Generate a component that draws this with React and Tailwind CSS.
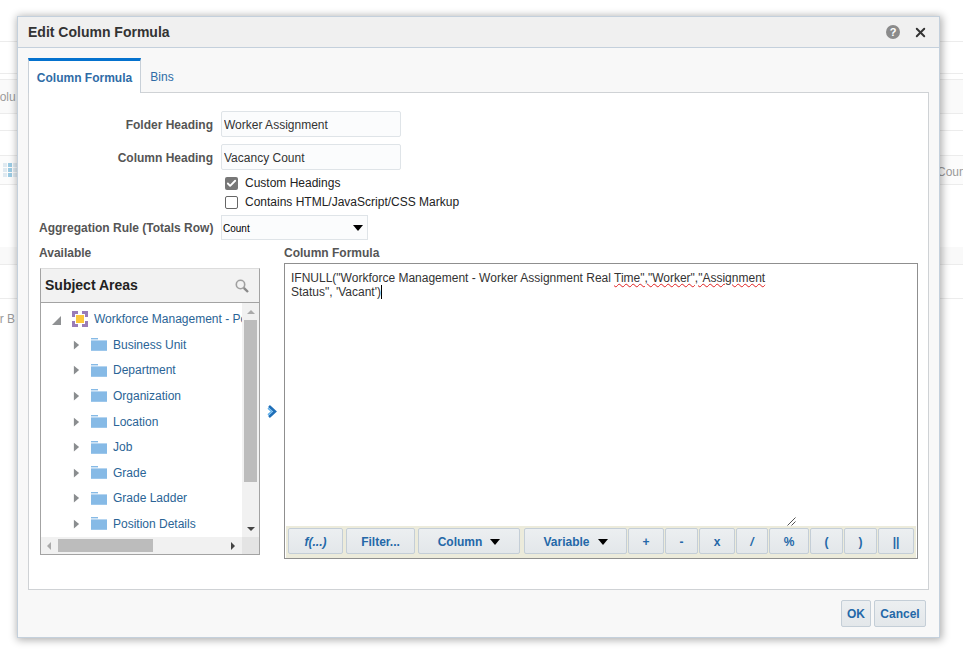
import { Check, X } from "lucide-react"

const folders = ["Business Unit", "Department", "Organization", "Location", "Job", "Grade", "Grade Ladder", "Position Details"]

const bgRows = [
  "h-[42px] border-b border-[#ececec]",
  "h-[32px] border-b border-[#ececec]",
  "h-[5px]",
  "h-[35px] border-y border-[#ececec] bg-[#fafafa]",
  "h-[17px] border-b border-[#ececec]",
  "h-[24px]",
  "h-[30px] border-y border-[#ececec] bg-[#fcfcfc]",
  "h-[62px]",
  "h-[18px] border-b border-[#ececec] bg-[#f9f9f9]",
  "h-[34px] border-b border-[#ececec]",
]

const gridCells = ["#dfe9f0", "#9ccbe3", "#dfe9f0", "#dfe9f0", "#9ccbe3", "#dfe9f0", "#dfe9f0", "#9ccbe3", "#dfe9f0"]

function Triangle({ className }) {
  return (
    <svg viewBox="0 0 8 12" className={className}>
      <path d="M1 1 L7 6 L1 11 Z" fill="#8a8d8f" />
    </svg>
  )
}

function FolderIcon() {
  return (
    <svg viewBox="0 0 16 13" className="w-4 h-[13px] shrink-0">
      <rect x="0" y="0" width="7" height="1.4" fill="#86bae6" />
      <rect x="0" y="2.4" width="16" height="10.4" fill="#86bae6" />
    </svg>
  )
}

function SubjectIcon() {
  return (
    <svg viewBox="0 0 16 16" className="w-4 h-4 shrink-0">
      <path d="M0 0h6v3H3v3H0z M10 0h6v6h-3V3h-3z M0 10h3v3h3v3H0z M13 10h3v6h-6v-3h3z" fill="#9a7db8" />
      <rect x="4" y="4" width="8" height="8" fill="#fcc83c" />
    </svg>
  )
}

function ToolButton({ width, italic, children }) {
  return (
    <button className={`${width} h-[26px] pt-[1px] shrink-0 flex items-center justify-center gap-2 rounded-[2px] border border-[#c4ced7] bg-linear-to-b from-[#eceff1] to-[#e3e7ea] text-[12px] font-bold text-[#2468a8] ${italic ? "italic" : ""}`}>
      {children}
    </button>
  )
}

function DownArrow() {
  return <span className="w-0 h-0 border-x-[5px] border-x-transparent border-t-[6px] border-t-black" />
}

function Field({ label, value }) {
  return (
    <div className="flex items-center h-[26px]">
      <label className="w-[182px] pr-2 pt-[1px] text-right text-[12px] font-bold text-[#555]">{label}</label>
      <input
        readOnly
        value={value}
        className="w-[180px] h-[26px] px-[2px] pt-[1px] rounded-[2px] border border-[#dfe4e8] bg-[#fbfcfd] text-[12px] text-[#333] outline-none"
      />
    </div>
  )
}

export default function App() {
  return (
    <div className="relative w-[963px] h-[659px] overflow-hidden bg-white font-['Liberation_Sans',Arial,sans-serif]">
      {/* page behind the dialog */}
      <div>
        {bgRows.map((row, i) => (
          <div key={i} className={row} />
        ))}
      </div>
      <span className="absolute left-[-9px] top-[88px] text-[12px] text-[#9a9a9a]">Colu</span>
      <span className="absolute left-[-7px] top-[310px] text-[12px] text-[#9a9a9a]">er B</span>
      <span className="absolute left-[937px] top-[163px] text-[12px] text-[#9a9a9a]">Count</span>
      <div className="absolute left-[3px] top-[163px] grid grid-cols-3 gap-px w-[14px]">
        {gridCells.map((color, i) => (
          <span key={i} className="h-[4px]" style={{ backgroundColor: color }} />
        ))}
      </div>

      {/* dialog */}
      <div className="absolute left-[17px] top-[16px] w-[923px] h-[622px] flex flex-col border border-[#c4d0dc] bg-[#f8f8f8] shadow-[1px_1px_8px_1px_rgba(0,0,0,0.32)]">
        <div className="h-[31px] shrink-0 flex items-center px-[10px] border-b border-[#c4d0dc] bg-[#f0f0f0]">
          <h1 className="pt-[1px] text-[14px] font-bold text-[#333]">Edit Column Formula</h1>
          <div className="ml-auto flex items-center gap-[13px] pr-[1px]">
            <span className="w-[14px] h-[14px] rounded-full bg-[#8b8b8b] text-white text-[11px] font-bold leading-[14px] text-center">?</span>
            <X className="w-[15px] h-[15px] text-[#333]" strokeWidth={3} />
          </div>
        </div>

        <div className="flex-1 flex flex-col px-[10px] pt-[10px]">
          {/* tabs */}
          <div className="h-[35px] shrink-0 flex -mb-px">
            <div className="relative z-10 w-[113px] pt-[1px] flex items-center justify-center border-t-[3px] border-t-[#0572ce] border-x border-x-[#c8d0d8] bg-white text-[12px] font-bold text-[#2f6ca6]">
              Column Formula
            </div>
            <div className="w-[42px] pt-[3px] flex items-center justify-center text-[12px] text-[#2f6ca6]">Bins</div>
          </div>

          {/* panel */}
          <div className="h-[498px] shrink-0 border border-[#cfd2d5] bg-white px-[10px] pt-[18px]">
            <div className="flex flex-col gap-[7px]">
              <Field label="Folder Heading" value="Worker Assignment" />
              <Field label="Column Heading" value="Vacancy Count" />
            </div>
            <div className="mt-[6px] ml-[186px] flex flex-col gap-[5px] text-[12px] text-[#222]">
              <div className="flex items-center gap-[7px] h-[14px]">
                <span className="w-[13px] h-[13px] rounded-[2px] bg-[#777] flex items-center justify-center">
                  <Check className="w-[11px] h-[11px] text-white" strokeWidth={4} />
                </span>
                Custom Headings
              </div>
              <div className="flex items-center gap-[7px] h-[14px]">
                <span className="w-[13px] h-[13px] rounded-[2px] border border-[#666] bg-white" />
                Contains HTML/JavaScript/CSS Markup
              </div>
            </div>
            <div className="mt-[6px] flex items-center h-[25px]">
              <label className="w-[182px] pr-2 pt-[1px] text-right text-[12px] font-bold text-[#555] whitespace-nowrap">Aggregation Rule (Totals Row)</label>
              <div className="w-[147px] h-[25px] flex items-center justify-between pl-[1px] pr-[4px] pt-[1px] border border-[#dfe4e8] bg-[#fbfcfd] text-[10px] text-black">
                Count
                <DownArrow />
              </div>
            </div>

            <div className="mt-[5px] flex">
              {/* available column */}
              <div className="w-[245px] shrink-0">
                <div className="text-[12px] font-bold text-[#555] leading-[16px]">Available</div>
                <div className="mt-[7px] ml-[1px] w-[220px] h-[287px] flex flex-col border border-[#a3a3a3] border-t-[#dcdcdc] border-x-[#a3a3a3]">
                  <div className="h-[34px] shrink-0 flex items-center justify-between px-[4px] pr-[10px] bg-[#f2f2f2] border-b border-[#a3a3a3]">
                    <span className="text-[14px] font-bold text-[#222]">Subject Areas</span>
                    <svg viewBox="0 0 14 14" className="w-[14px] h-[14px]">
                      <circle cx="5.5" cy="5.5" r="4.2" fill="none" stroke="#a0a0a0" strokeWidth="1.6" />
                      <path d="M8.8 8.8 L13 13" stroke="#8a8a8a" strokeWidth="2.4" />
                    </svg>
                  </div>
                  <div className="relative flex-1 min-h-0 pt-[3px] bg-white overflow-hidden">
                    <div className="flex items-center h-[26px] pl-[11px] w-[203px] overflow-hidden whitespace-nowrap">
                      <svg viewBox="0 0 9 9" className="w-[9px] h-[9px] mt-[2px] shrink-0">
                        <path d="M9 0 V9 H0 Z" fill="#8f9193" />
                      </svg>
                      <span className="ml-[11px]"><SubjectIcon /></span>
                      <span className="ml-[6px] text-[12px] text-[#2a6496]">Workforce Management - Position</span>
                    </div>
                    <ul>
                      {folders.map((name) => (
                        <li key={name} className="h-[25.6px] flex items-center pl-[32px]">
                          <Triangle className="w-[7px] h-[12px] shrink-0" />
                          <span className="ml-[11px]"><FolderIcon /></span>
                          <span className="ml-[6px] text-[12px] text-[#2a6496]">{name}</span>
                        </li>
                      ))}
                    </ul>
                    {/* scrollbars */}
                    <div className="absolute right-0 top-0 bottom-0 w-[17px] flex flex-col items-center bg-[#f1f1f1] pb-[17px]">
                      <span className="mt-[7px] w-0 h-0 border-x-[4px] border-x-transparent border-b-[4px] border-b-[#aaa]" />
                      <div className="mt-[6px] w-[13px] h-[162px] bg-[#bcbcbc]" />
                      <span className="mt-auto mb-[6px] w-0 h-0 border-x-[4px] border-x-transparent border-t-[4px] border-t-[#444]" />
                    </div>
                    <div className="absolute left-0 right-0 bottom-0 h-[17px] flex items-center bg-[#f1f1f1]">
                      <span className="ml-[6px] w-0 h-0 border-y-[4px] border-y-transparent border-r-[4px] border-r-[#aaa]" />
                      <div className="ml-[7px] w-[95px] h-[13px] bg-[#bcbcbc]" />
                      <span className="ml-[78px] w-0 h-0 border-y-[4px] border-y-transparent border-l-[4px] border-l-[#444]" />
                      <span className="ml-auto w-[17px] h-[17px] bg-[#e4e4e4]" />
                    </div>
                  </div>
                </div>
              </div>

              {/* formula column */}
              <div className="relative flex-1">
                <svg viewBox="0 0 10 13" className="absolute left-[-17px] top-[160px] w-[10px] h-[13px]">
                  <path d="M2 1 L8 6.5 L2 12" fill="none" stroke="#1f6fb8" strokeWidth="2.6" />
                  <path d="M1 3.2 L4.6 6.5 L1 9.8" fill="none" stroke="#5fb0ec" strokeWidth="1.6" />
                </svg>
                <div className="text-[12px] font-bold text-[#555] leading-[16px]">Column Formula</div>
                <div className="relative mt-[2px] w-[634px] h-[296px] flex flex-col border border-[#8f8f8f] bg-white">
                  <p className="flex-1 px-[6px] pt-[7px] pr-[140px] text-[12px] leading-[14px] text-[#333]">
                    IFNULL("Workforce Management - Worker Assignment Real{" "}
                    <span className="underline decoration-wavy decoration-[#e02020] decoration-1">Time","Worker","Assignment</span>{" "}
                    Status", 'Vacant')<span className="border-r border-black" />
                  </p>
                  <svg viewBox="0 0 9 9" className="absolute right-[121px] bottom-[32px] w-[9px] h-[9px]">
                    <path d="M0.5 8.5 L8.5 0.5 M4.5 8.5 L8.5 4.5" stroke="#555" strokeWidth="1" />
                  </svg>
                  <div className="h-[32px] mx-[1px] shrink-0 flex items-center px-[2px] pb-[2px] bg-[#ecebdb]">
                    <div className="flex gap-[3px]">
                      <ToolButton width="w-[55px]" italic>f(...)</ToolButton>
                      <ToolButton width="w-[69px]">Filter...</ToolButton>
                      <ToolButton width="w-[102px]">Column <DownArrow /></ToolButton>
                    </div>
                    <div className="ml-[4px] flex gap-[1px]">
                      <ToolButton width="w-[103px]">Variable <DownArrow /></ToolButton>
                      <ToolButton width="w-[36px]">+</ToolButton>
                      <ToolButton width="w-[33px]">-</ToolButton>
                      <ToolButton width="w-[36px]">x</ToolButton>
                      <ToolButton width="w-[32px]" italic>/</ToolButton>
                      <ToolButton width="w-[40px]">%</ToolButton>
                      <ToolButton width="w-[33px]">(</ToolButton>
                      <ToolButton width="w-[33px]">)</ToolButton>
                      <ToolButton width="w-[36px]">||</ToolButton>
                    </div>
                  </div>
                </div>
              </div>
            </div>
          </div>

          {/* footer */}
          <div className="flex-1 flex items-center justify-end gap-[3px] pr-[3px]">
            <button className="w-[30px] h-[27px] rounded-[2px] border border-[#c4ced7] bg-linear-to-b from-[#eceff1] to-[#e3e7ea] text-[12px] font-bold text-[#2468a8]">OK</button>
            <button className="w-[52px] h-[27px] rounded-[2px] border border-[#c4ced7] bg-linear-to-b from-[#eceff1] to-[#e3e7ea] text-[12px] font-bold text-[#2468a8]">Cancel</button>
          </div>
        </div>
      </div>
    </div>
  )
}
